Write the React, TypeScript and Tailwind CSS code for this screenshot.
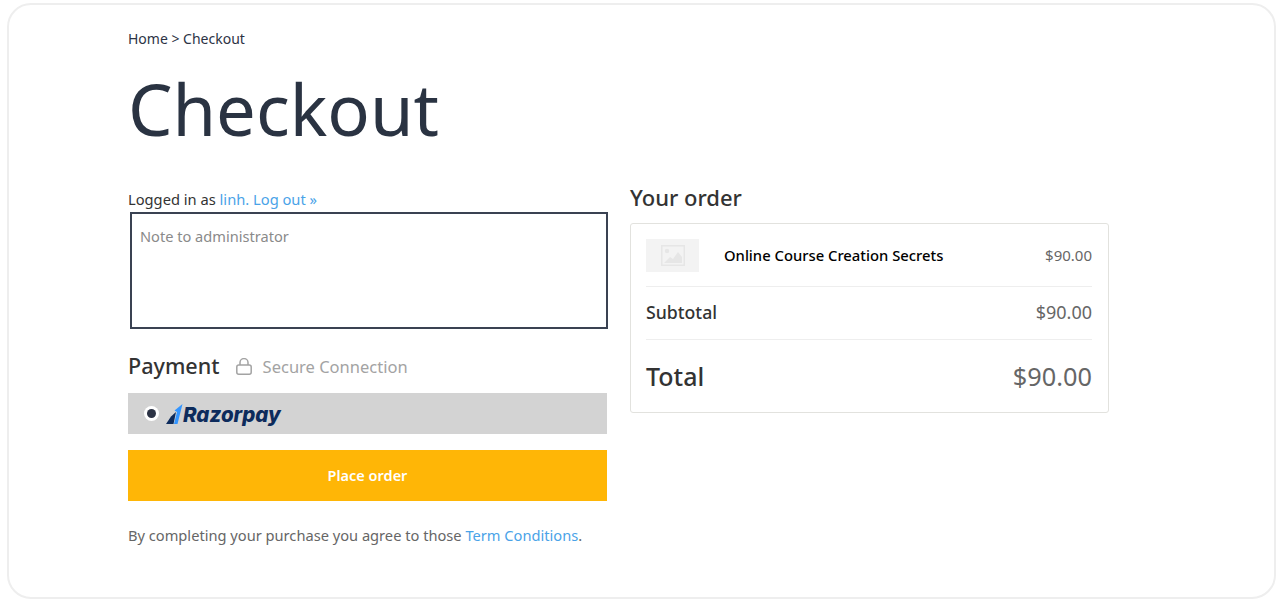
const font = { fontFamily: '"Noto Sans", "Open Sans", sans-serif' };

function ImagePlaceholder() {
  return (
    <div className="flex h-[33px] w-[53px] items-center justify-center bg-[#f3f3f3]">
      <svg viewBox="0 0 24 21" className="h-[21px] w-[24px]" aria-hidden>
        <rect x="0.75" y="0.75" width="22.5" height="19.5" fill="none" stroke="#e6e6e6" strokeWidth="1.5" />
        <circle cx="6" cy="6" r="2.2" fill="#e6e6e6" />
        <path d="M3 18 L9 12 L12 14 L17 7 L21 12 V18 Z" fill="#e6e6e6" />
      </svg>
    </div>
  );
}

function LockIcon() {
  return (
    <svg viewBox="0 0 16 17" className="h-[17px] w-[16px]" fill="none" stroke="#a3a3a3" strokeWidth="1.5" aria-hidden>
      <rect x="0.8" y="7" width="14.4" height="9.2" rx="2" />
      <path d="M4 7V4.6a4 4 0 0 1 8 0V7" />
    </svg>
  );
}

function RazorpayLogo() {
  return (
    <div className="flex items-end">
      <svg viewBox="0 0 17 20" className="h-[20px] w-[17px]" aria-hidden>
        <path d="M0 20 L5 12.5 L10 8 L7.5 20 Z" fill="#0d2b5c" />
        <path d="M8.5 6.5 L16.5 0 L11.5 20 L8 20 L11 8 Z" fill="#3395ff" />
      </svg>
      <span
        style={{ fontFamily: "Inter, sans-serif" }}
        className="text-[20.5px] font-extrabold italic leading-[18px] text-[#0d2b5c]"
      >
        Razorpay
      </span>
    </div>
  );
}

export default function App() {
  return (
    <div style={font} className="h-[601px] w-[1281px] overflow-hidden bg-white pt-[3px] pl-[7px]">
      <div className="h-[596px] w-[1269px] rounded-[24px] border-2 border-[#eeeeee] pl-[119px] pt-[23px]">
        <div className="text-[14px] leading-[22px] text-[#2c3345]">Home &gt; Checkout</div>
        <h1 className="mt-[17px] text-[70.5px] leading-[84px] font-normal text-[#2a3342]">Checkout</h1>

        <div className="mt-[31px] flex gap-[23px]">
          <div className="w-[479px] pt-[7px]">
            <div className="text-[14.7px] leading-[20px] text-[#333333]">
              Logged in as <span className="text-[#4aa3e8]">linh. Log out »</span>
            </div>
            <div className="ml-[2px] mt-[3px] h-[117px] w-[478px] border-2 border-[#3a4252] px-[8px] py-[12px] text-[14.6px] leading-[20px] text-[#8a8a8a]">
              Note to administrator
            </div>

            <div className="mt-[22px] flex items-center">
              <span className="text-[21.6px] leading-[30px] font-medium text-[#333333]">Payment</span>
              <span className="ml-[16px]"><LockIcon /></span>
              <span className="ml-[11px] mt-[2px] text-[16.5px] text-[#a3a3a3]">Secure Connection</span>
            </div>

            <div className="mt-[12px] flex h-[41px] items-center bg-[#d3d3d3] pl-[16px]">
              <span className="flex h-[15px] w-[15px] items-center justify-center rounded-full bg-white">
                <span className="h-[9px] w-[9px] rounded-full bg-[#2c3345]" />
              </span>
              <span className="ml-[7px]"><RazorpayLogo /></span>
            </div>

            <div className="mt-[16px] flex h-[51px] items-center justify-center bg-[#ffb606] text-[14.5px] font-semibold text-white">
              Place order
            </div>

            <div className="mt-[24px] text-[14.65px] leading-[20px] text-[#666666]">
              By completing your purchase you agree to those <span className="text-[#4aa3e8]">Term Conditions</span>.
            </div>
          </div>

          <div className="w-[479px]">
            <h2 className="text-[22px] leading-[30px] font-medium text-[#333333]">Your order</h2>
            <div className="mt-[11px] rounded-[3px] border border-[#e2e2de] pl-[15px] pr-[16px]">
              <div className="flex h-[63px] items-center border-b border-[#eeeeee]">
                <ImagePlaceholder />
                <span className="ml-[25px] text-[14.8px] font-medium text-black">Online Course Creation Secrets</span>
                <span className="ml-auto text-[15px] text-[#666666]">$90.00</span>
              </div>
              <div className="flex h-[53px] items-center justify-between border-b border-[#eeeeee] pb-[2px]">
                <span className="text-[17.7px] font-medium text-[#333333]">Subtotal</span>
                <span className="text-[18px] text-[#666666]">$90.00</span>
              </div>
              <div className="flex h-[72px] items-center justify-between pt-[2px]">
                <span className="text-[25px] font-medium text-[#333333]">Total</span>
                <span className="text-[25.3px] text-[#666666]">$90.00</span>
              </div>
            </div>
          </div>
        </div>
      </div>
    </div>
  );
}
